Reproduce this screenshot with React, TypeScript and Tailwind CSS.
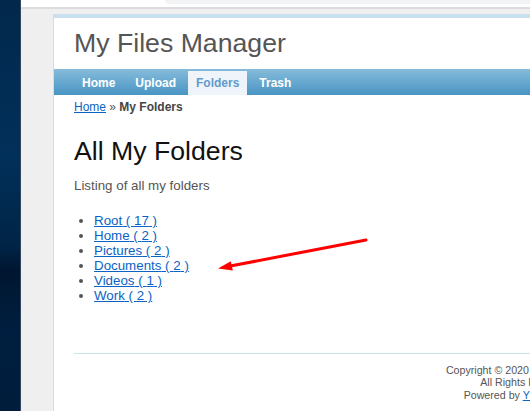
const navItems = ["Home", "Upload", "Folders", "Trash"];

const folders = [
  { name: "Root", count: 17 },
  { name: "Home", count: 2 },
  { name: "Pictures", count: 2 },
  { name: "Documents", count: 2 },
  { name: "Videos", count: 1 },
  { name: "Work", count: 2 },
];

export default function App() {
  return (
    <div className="relative flex w-[530px] h-[411px] overflow-hidden font-['Liberation_Sans',Arial,sans-serif] text-[#555]">
      {/* desktop edge */}
      <div className="w-[20px] shrink-0 bg-[linear-gradient(180deg,#02284c_0%,#01305a_38%,#002446_60%,#001530_66%,#001a36_71%,#001e3f_80%,#001d3c_100%)]" />
      <div className="w-px shrink-0 bg-[#34465b]" />

      <div className="flex-1 min-w-0 flex flex-col bg-[#efefef]">
        <div className="flex h-[7px] bg-white">
          <div className="ml-[144px] flex-1 h-[4px] rounded-bl-[8px] bg-[#f1f3f4]" />
        </div>
        <div className="h-[2px] bg-[#dcdcdc]" />

        <div className="pl-[32px] pt-[5px]">
          <div className="w-[950px] bg-white border-l border-t-4 border-[#c9e0ed]">
            <div className="px-[20px] py-[10px] text-[26.67px] leading-[31px] text-[#555]">
              My Files Manager
            </div>

            <div className="flex items-end h-[26px] pl-[20px] gap-[4px] bg-[linear-gradient(180deg,#86bcda,#4995c4)]">
              {navItems.map((item) => (
                <a
                  key={item}
                  className={
                    item === "Folders"
                      ? "px-[8px] py-[5px] text-[12px] leading-[14px] font-bold bg-[#eff4fa] text-[#6399cd]"
                      : "px-[8px] py-[5px] text-[12px] leading-[14px] font-bold text-white"
                  }
                >
                  {item}
                </a>
              ))}
            </div>

            <div className="px-[20px] py-[5px] text-[12px] leading-[14px]">
              <a className="text-[#0b63c5] underline">Home</a>
              <span> » </span>
              <span className="font-bold text-[#444]">My Folders</span>
            </div>

            <div className="px-[20px] pt-[19px]">
              <h1 className="text-[26.67px] leading-[27px] text-[#111]">All My Folders</h1>
              <p className="mt-[11px] text-[13.33px] leading-[20px]">Listing of all my folders</p>
              <ul className="mt-[17px] pl-[20px] list-disc text-[13.33px] leading-[15px]">
                {folders.map((f) => (
                  <li key={f.name}>
                    <a className="text-[#0b63c5] underline">
                      {f.name} ( {f.count} )
                    </a>
                  </li>
                ))}
              </ul>
            </div>

            <div className="mx-[20px] mt-[50px] pt-[10px] pb-[10px] border-t border-[#c9e0ed] text-center text-[10.67px] leading-[12.3px]">
              Copyright © 2020 by My Company.
              <br />
              All Rights Reserved.
              <br />
              Powered by <a className="text-[#0b63c5] underline">Yii Framework</a>.
            </div>
          </div>
        </div>
      </div>

      <svg className="absolute left-0 top-0 pointer-events-none" width="530" height="411" viewBox="0 0 530 411">
        <line x1="366" y1="240" x2="229" y2="266.3" stroke="#ff0000" strokeWidth="3" strokeLinecap="round" />
        <polygon points="218,268.5 230.8,261.2 232.8,270.6" fill="#ff0000" />
      </svg>
    </div>
  );
}
